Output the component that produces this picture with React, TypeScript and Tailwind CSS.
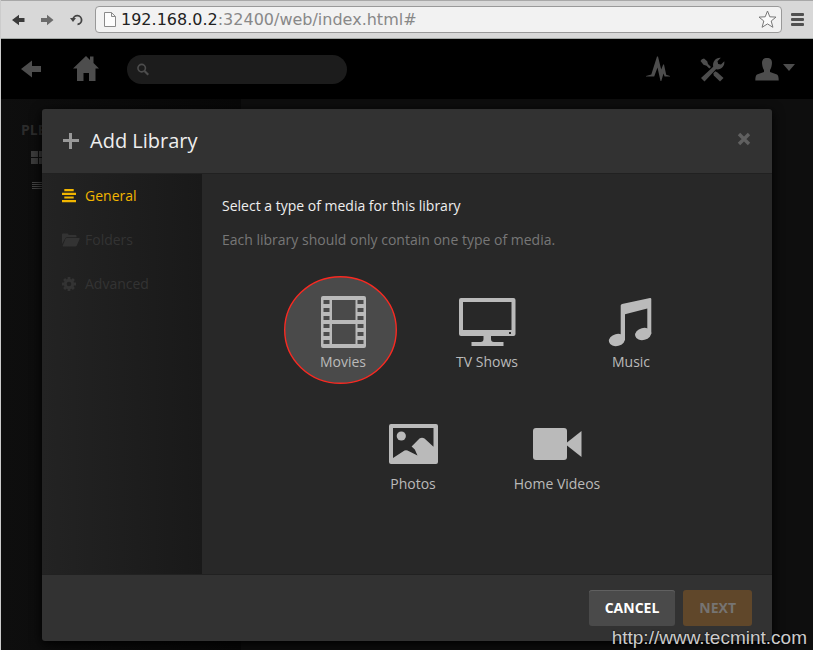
import { useState } from "react";
import type { ReactNode } from "react";

const MovieIcon = () => (
  <svg width="60" height="52" viewBox="0 0 60 52" fill="currentColor" aria-hidden="true">
    <path
      fillRule="evenodd"
      d="M10 0h41a2 2 0 0 1 2 2v48a2 2 0 0 1-2 2h-41a2 2 0 0 1-2-2V2a2 2 0 0 1 2-2zM19 4v20h23.500V4zM19 28v20h23.500V28zM10.500 4v4h6V4zM10.500 12v4h6v-4zM10.500 20v4h6v-4zM10.500 28v4h6v-4zM10.500 36v4h6v-4zM10.500 44v4h6v-4zM44.500 4v4h6V4zM44.500 12v4h6v-4zM44.500 20v4h6v-4zM44.500 28v4h6v-4zM44.500 36v4h6v-4zM44.500 44v4h6v-4z"
    />
  </svg>
);

const TvIcon = () => (
  <svg width="60" height="52" viewBox="0 0 60 52" fill="currentColor" aria-hidden="true">
    <path
      fillRule="evenodd"
      d="M4 2h52.500a2 2 0 0 1 2 2v34a2 2 0 0 1-2 2H34v3c0 2 1 3 3 3h9.500v4h-32v-4h9c2 0 3-1 3-3v-3H4a2 2 0 0 1-2-2V4a2 2 0 0 1 2-2zM6 6v28h48.500V6zM52 36v2h2v-2z"
    />
  </svg>
);

const MusicIcon = () => (
  <svg width="60" height="52" viewBox="0 0 60 52" fill="currentColor" aria-hidden="true">
    <path d="M19.700 9.500Q19.700 8.500 21 8L49 2.100Q50.300 2 50.300 3V38H46.300V12.500L24 18.300V44H19.700z" />
    <ellipse cx="16" cy="44" rx="8.200" ry="6" transform="rotate(-14 16 44)" />
    <ellipse cx="42.200" cy="38" rx="8.200" ry="6" transform="rotate(-14 42.200 38)" />
  </svg>
);

const PhotoIcon = () => (
  <svg width="60" height="52" viewBox="0 0 60 52" fill="currentColor" aria-hidden="true">
    <path
      fillRule="evenodd"
      d="M8 6h45a2 2 0 0 1 2 2v36a2 2 0 0 1-2 2H8a2 2 0 0 1-2-2V8a2 2 0 0 1 2-2zM10 10v30L21.500 32.600Q23 31.800 24.500 32.600L34.500 37.500L31.800 31.500L28.600 28.500L36.500 20.500Q39 18.800 41.500 20.500L50.500 28.700V10z"
    />
    <circle cx="18.300" cy="18" r="4.600" />
  </svg>
);

const VideoIcon = () => (
  <svg width="60" height="52" viewBox="0 0 60 52" fill="currentColor" aria-hidden="true">
    <rect x="6" y="10" width="34" height="32" rx="3" />
    <path d="M40 24.500L54.500 13v26L40 27.500z" />
  </svg>
);

const GeneralIcon = () => (
  <svg width="14" height="14" viewBox="0 0 14 14" fill="currentColor" aria-hidden="true">
    <path d="M2.300 0h9.400v2.200H2.300zM0 3.700h14v2.200H0zM2.300 7.400h9.400v2.200H2.300zM0 11.100h14v2.200H0z" />
  </svg>
);

const FolderIcon = () => (
  <svg width="18" height="14" viewBox="0 0 18 14" fill="currentColor" aria-hidden="true">
    <path d="M0 11V1.500Q0 .5 1 .5h4.500Q6.500.5 6.500 1.500V2h7Q14.500 2 14.500 3V4.300H5Q3.800 4.300 3.300 5.300z" />
    <path d="M4.500 5H17Q18 5 17.600 6L14.800 12.500Q14.400 13.500 13.300 13.500H1.200Q.3 13.500.8 12.500L3.500 5.700Q3.800 5 4.500 5z" />
  </svg>
);

const CogIcon = () => (
  <svg width="14" height="14" viewBox="0 0 14 14" fill="none" stroke="currentColor" aria-hidden="true">
    <circle cx="7" cy="7" r="3.800" strokeWidth="3" />
    <path
      strokeWidth="2.800"
      d="M7 0V2.500M7 11.500V14M0 7H2.500M11.500 7H14M2.100 2.100L3.800 3.800M10.200 10.200L11.900 11.900M11.900 2.100L10.200 3.800M3.800 10.200L2.100 11.900"
    />
  </svg>
);

const sections = [
  { id: "general", label: "General", icon: <GeneralIcon /> },
  { id: "folders", label: "Folders", icon: <FolderIcon /> },
  { id: "advanced", label: "Advanced", icon: <CogIcon /> },
];

type MediaType = { id: string; label: string; icon: ReactNode };

const firstRow: MediaType[] = [
  { id: "movies", label: "Movies", icon: <MovieIcon /> },
  { id: "tv", label: "TV Shows", icon: <TvIcon /> },
  { id: "music", label: "Music", icon: <MusicIcon /> },
];

const secondRow: MediaType[] = [
  { id: "photos", label: "Photos", icon: <PhotoIcon /> },
  { id: "videos", label: "Home Videos", icon: <VideoIcon /> },
];

function BrowserBar() {
  return (
    <div className="flex h-[39px] items-center border-t border-b border-t-[#a8a8a8] border-b-[#a3a8a5] bg-[#d8d8d8] pr-[9px] pl-[11px]">
      <button type="button" aria-label="Back" className="mr-4">
        <svg width="13" height="12" viewBox="0 0 13 12" fill="#3a3a3a">
          <path d="M0 6L7 .8V4H12.500V8H7V11.200z" />
        </svg>
      </button>
      <button type="button" aria-label="Forward" className="mr-4">
        <svg width="13" height="12" viewBox="0 0 13 12" fill="#6b6b6b">
          <path d="M12.500 6L6 .8V4H0V8H6V11.200z" />
        </svg>
      </button>
      <button type="button" aria-label="Reload" className="mr-3">
        <svg width="13" height="13" viewBox="0 0 13 13" fill="none" stroke="#444" strokeWidth="1.800">
          <path d="M3 6.500A4.300 4.300 0 1 1 7.500 11.300" />
          <path d="M0 5h6L3 9z" fill="#444" stroke="none" />
        </svg>
      </button>
      <div className="flex h-[27px] flex-1 items-center rounded-sm border border-[#999] bg-[#f2f2f2] px-2">
        <svg width="12" height="15" viewBox="0 0 12 15" fill="#fdfdfd" stroke="#8a8a8a">
          <path d="M.5.500h7l4 4v10H.5zM7.500 .5V4.500h4" />
        </svg>
        <a href="#" className="ml-[5px] flex-1 font-['DejaVu_Sans',sans-serif] text-[16px] leading-5 text-[#888]">
          <span className="text-[#222]">192.168.0.2</span>:32400/web/index.html#
        </a>
        <button type="button" aria-label="Bookmark" className="-mr-1">
          <svg width="19" height="19" viewBox="0 0 19 19" fill="#fafafa" stroke="#777" strokeLinejoin="round">
            <path d="M9.500 1L11.800 6.800L18 7.100L13.200 11L14.900 17.300L9.500 13.900L4.100 17.300L5.800 11L1 7.100L7.200 6.800z" />
          </svg>
        </button>
      </div>
      <button type="button" aria-label="Menu" className="ml-2">
        <svg width="14" height="14" viewBox="0 0 14 14" fill="#505050">
          <rect x="1" width="13" height="3" rx="1" />
          <rect x="1" y="5" width="13" height="3" rx="1" />
          <rect x="1" y="10" width="13" height="3" rx="1" />
        </svg>
      </button>
    </div>
  );
}

function TopNav() {
  return (
    <nav className="flex h-[60px] items-center bg-black pr-[18px] pl-5 text-[#4d4d4d]">
      <button type="button" aria-label="Go back" className="mr-8">
        <svg width="20" height="18" viewBox="0 0 20 18" fill="currentColor">
          <path d="M0 9L11 .5V6H20V12H11V17.500z" />
        </svg>
      </button>
      <button type="button" aria-label="Home" className="mr-7">
        <svg width="26" height="26" viewBox="0 0 26 26" fill="currentColor">
          <path d="M13 0L17 4V.5H20.500V7L26 12.500H22.500V25H16V17H10.500V25H4V12.500H0z" />
        </svg>
      </button>
      <label className="flex h-[29px] w-[220px] items-center rounded-full bg-[#1c1c1c] pl-[10px]">
        <svg width="13" height="13" viewBox="0 0 13 13" fill="none" stroke="currentColor" strokeWidth="1.700">
          <circle cx="5" cy="5" r="4" />
          <path d="M8 8L12 12" strokeWidth="2.200" />
        </svg>
        <input type="text" aria-label="Search" className="w-full bg-transparent px-2 text-sm outline-none" />
      </label>
      <div className="ml-auto flex items-center">
        <button type="button" aria-label="Activity" className="mr-[30px]">
          <svg width="24" height="26" viewBox="0 0 24 26" fill="currentColor">
            <path d="M0 20.500V20L5.300 18.600L11 0.500H12L15.200 13.500L17.200 8.500H18L20.200 18.800L24 20V20.500H18.600L17.500 17.500L15.300 25H14.500L11.500 11.500L8.200 20.500z" />
          </svg>
        </button>
        <button type="button" aria-label="Settings" className="mr-[30px]">
          <svg width="25" height="25" viewBox="0 0 25 25" fill="currentColor">
            <path d="M.5 4Q1.500 1.500 4 1.500L7.200 4.300L8 7L11 10L9.300 11.500L6.500 8.800L3.500 7.800z" />
            <path d="M15.300 14.300L17.500 15.500L23.500 21L20 24.500L13.800 18.500L13.300 16.300z" />
            <path d="M1 21L13.200 9.800C12.300 4.500 16 .2 20.800 .8L17.500 4.300L18.200 7L21 7.500L24.300 4.300C25 9.500 20.800 13.300 16 12.300L4.500 24.500z" />
          </svg>
        </button>
        <button type="button" aria-label="Account" className="flex items-center gap-1">
          <svg width="24" height="23" viewBox="0 0 24 23" fill="currentColor">
            <path d="M12 0C16 0 17.300 2.500 16.900 6C16.600 9.500 15.500 11 15 12V14L22 16.500Q23.700 17.500 23.700 22.500H.3Q.3 17.500 2 16.500L9 14V12C8.500 11 7.400 9.500 7.100 6C6.700 2.500 8 0 12 0z" />
          </svg>
          <svg width="12" height="10" viewBox="0 0 12 10" fill="currentColor">
            <path d="M0 0H12L6 7z" />
          </svg>
        </button>
      </div>
    </nav>
  );
}

export default function App() {
  const [section, setSection] = useState("general");
  const [media, setMedia] = useState("movies");

  const renderTile = (item: MediaType) => (
    <button
      key={item.id}
      type="button"
      onClick={() => setMedia(item.id)}
      className="relative flex w-36 flex-col items-center gap-1 text-[#bababa]"
    >
      {media === item.id && (
        <svg className="absolute -top-5 left-[13px]" width="113" height="108" viewBox="0 0 113 108" aria-hidden="true">
          <ellipse cx="56.500" cy="54" rx="55.800" ry="53.300" fill="#4a4a4a" stroke="#f82a22" strokeWidth="1.400" />
        </svg>
      )}
      <span className="relative">{item.icon}</span>
      <span className="relative leading-5">{item.label}</span>
    </button>
  );

  return (
    <div className="flex min-h-screen flex-col border-l border-[#ccc] bg-[#0e0e0e] font-['Open_Sans',sans-serif] text-sm">
      <BrowserBar />
      <TopNav />
      <div className="relative flex flex-1">
        <aside className="w-60 bg-gradient-to-r from-[#0e0e0e] to-[#080808] pt-[21px] pl-5 text-[#2c2c2c]">
          <h2 className="font-bold leading-5">PLEX</h2>
          <svg className="mt-[11px] ml-[10px]" width="15" height="13" viewBox="0 0 15 13" fill="#3c3c3c">
            <path d="M0 0h7v6H0zM8 0h7v6H8zM0 7h7v6H0zM8 7h7v6H8z" />
          </svg>
          <svg className="mt-[18px] ml-[11px]" width="14" height="8" viewBox="0 0 14 8" fill="#444">
            <path d="M0 0h14v1H0zM0 2h14v1H0zM0 4h14v1H0zM0 6h14v1H0z" />
          </svg>
        </aside>

        <div className="absolute inset-x-0 top-0 flex justify-center px-5 pt-[10px]">
          <section
            role="dialog"
            aria-labelledby="dialog-title"
            className="w-full max-w-[730px] overflow-hidden rounded-[3px] bg-[#323232] shadow-[0_3px_12px_#000]"
          >
            <header className="flex h-16 items-center pr-[21px] pl-5">
              <svg width="17" height="17" viewBox="0 0 17 17" fill="#999" aria-hidden="true">
                <path d="M7 0h3v6h7v3h-7v7H7v-7H1V6h6z" />
              </svg>
              <h1 id="dialog-title" className="ml-[11px] text-xl text-[#eee]">
                Add Library
              </h1>
              <button type="button" aria-label="Close" className="ml-auto pb-1 text-[#606060]">
                <svg width="14" height="14" viewBox="0 0 14 14" stroke="currentColor" strokeWidth="3.400">
                  <path d="M2 2L12 12M12 2L2 12" />
                </svg>
              </button>
            </header>

            <div className="flex min-h-[402px] border-y border-[#212121] bg-[#282828]">
              <ul className="w-40 shrink-0 bg-gradient-to-r from-[#232323] to-[#191919]">
                {sections.map((s) => (
                  <li key={s.id}>
                    <button
                      type="button"
                      onClick={() => setSection(s.id)}
                      className={`flex h-11 w-full items-center pl-5 ${section === s.id ? "text-[#f2b600]" : "text-[#333]"}`}
                    >
                      <span className="w-[23px]">{s.icon}</span>
                      {s.label}
                    </button>
                  </li>
                ))}
              </ul>
              <div className="flex-1 pt-[22px]">
                <p className="px-5 leading-5 text-[#eee]">Select a type of media for this library</p>
                <p className="mt-[14px] px-5 leading-5 text-[#777]">
                  Each library should only contain one type of media.
                </p>
                <div className="mt-[46px] flex justify-center">{firstRow.map(renderTile)}</div>
                <div className="mt-[46px] flex justify-center pr-1">{secondRow.map(renderTile)}</div>
              </div>
            </div>

            <footer className="flex justify-end gap-2 px-5 py-[15px] font-bold">
              <button
                type="button"
                className="h-9 rounded-[3px] bg-[#4a4a4a] px-4 text-white shadow-[inset_0_1px_0_#606060]"
              >
                CANCEL
              </button>
              <button type="button" disabled className="h-9 rounded-[3px] bg-[#60472a] px-4 text-[#767472]">
                NEXT
              </button>
            </footer>
          </section>
        </div>
        <a
          href="http://www.tecmint.com"
          className="absolute right-[6px] bottom-0 font-['Liberation_Sans',sans-serif] text-[19px] leading-6 text-[#ccc] [text-shadow:0_0_2px_#000]"
        >
          http://www.tecmint.com
        </a>
      </div>
    </div>
  );
}
